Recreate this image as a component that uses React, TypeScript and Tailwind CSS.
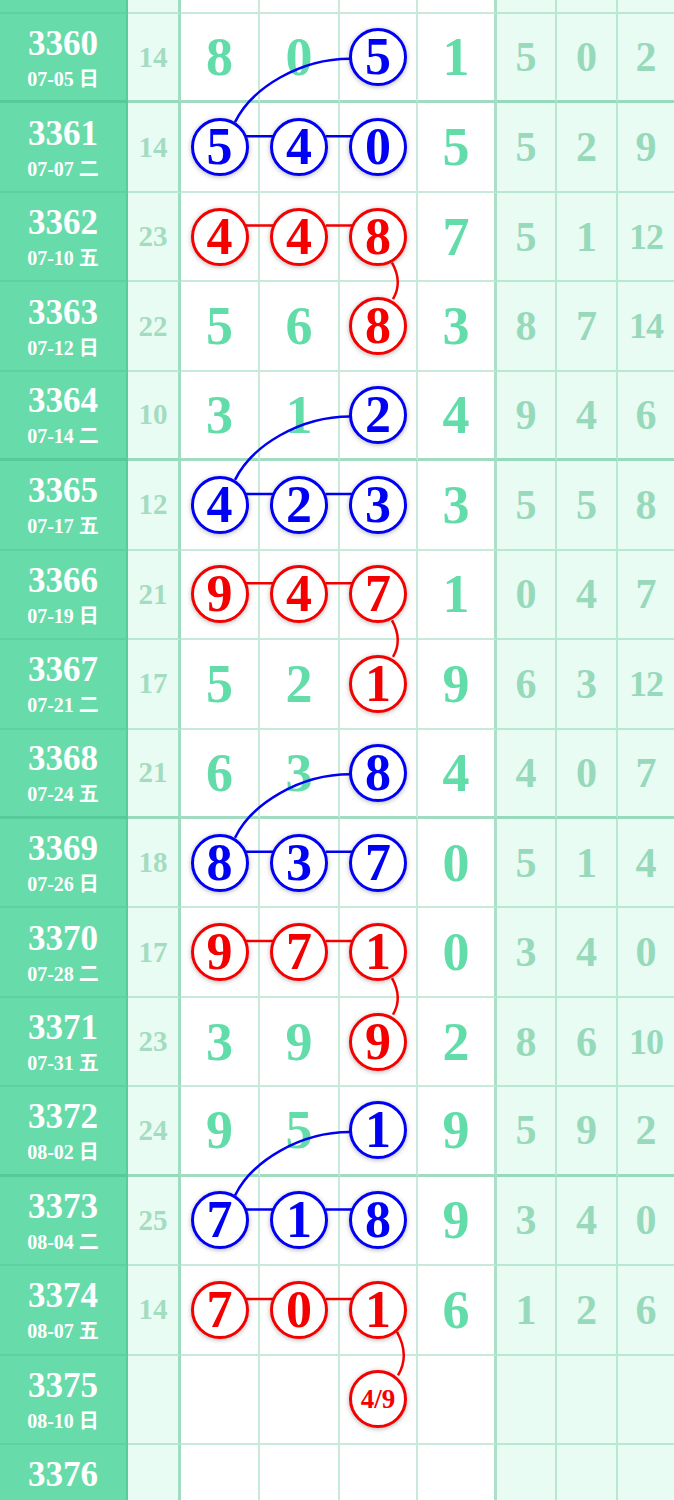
import React from "react";

type Row = [string, string, string, string[], string, string[]];

const rows: Row[] = [
  ["3360", "07-05 日", "14", ["8", "0", "5"], "1", ["5", "0", "2"]],
  ["3361", "07-07 二", "14", ["5", "4", "0"], "5", ["5", "2", "9"]],
  ["3362", "07-10 五", "23", ["4", "4", "8"], "7", ["5", "1", "12"]],
  ["3363", "07-12 日", "22", ["5", "6", "8"], "3", ["8", "7", "14"]],
  ["3364", "07-14 二", "10", ["3", "1", "2"], "4", ["9", "4", "6"]],
  ["3365", "07-17 五", "12", ["4", "2", "3"], "3", ["5", "5", "8"]],
  ["3366", "07-19 日", "21", ["9", "4", "7"], "1", ["0", "4", "7"]],
  ["3367", "07-21 二", "17", ["5", "2", "1"], "9", ["6", "3", "12"]],
  ["3368", "07-24 五", "21", ["6", "3", "8"], "4", ["4", "0", "7"]],
  ["3369", "07-26 日", "18", ["8", "3", "7"], "0", ["5", "1", "4"]],
  ["3370", "07-28 二", "17", ["9", "7", "1"], "0", ["3", "4", "0"]],
  ["3371", "07-31 五", "23", ["3", "9", "9"], "2", ["8", "6", "10"]],
  ["3372", "08-02 日", "24", ["9", "5", "1"], "9", ["5", "9", "2"]],
  ["3373", "08-04 二", "25", ["7", "1", "8"], "9", ["3", "4", "0"]],
  ["3374", "08-07 五", "14", ["7", "0", "1"], "6", ["1", "2", "6"]],
  ["3375", "08-10 日", "", ["", "", "4/9"], "", ["", "", ""]],
];

// row centre in px (rows are 89.44 tall, first starts at 14)
const yc = (r: number) => 58.72 + r * 89.44;

function Circle({ v, color }: { v: string; color: "blue" | "red" }) {
  return (
    <div
      className={`relative z-10 flex h-[58px] w-[58px] items-center justify-center rounded-full border-[3px] bg-white font-bold leading-none shadow-[0_1px_5px_rgba(0,0,0,0.3)] ${
        color === "blue" ? "border-[#0000f5] text-[#0000f5]" : "border-[#f50000] text-[#f50000]"
      } ${v.length > 1 ? "text-[27px]" : "text-[52px]"}`}
    >
      {v}
    </div>
  );
}

function TableRow({ row, i }: { row: Row | null; i: number }) {
  const thick = i % 4 === 0 && i >= 0;
  const b = thick
    ? "border-b-[3px] border-b-[rgba(70,185,135,0.5)]"
    : "border-b-[2px] border-b-[rgba(70,185,135,0.3)]";
  const kind = ((i % 4) + 4) % 4;
  const circleAt = (k: number) => {
    if (i < 0 || !row) return null;
    if (kind === 1) return "blue";
    if (kind === 2) return "red";
    if (k === 2) return kind === 0 ? "blue" : "red";
    return null;
  };
  const mid = (k: number, cls: string) => {
    const v = row ? row[3][k] : "";
    const c = circleAt(k);
    return (
      <div className={`flex h-full items-center justify-center bg-white ${cls} ${b}`}>
        {v && c ? (
          <Circle v={v} color={c} />
        ) : (
          <span className="text-[54px] font-bold leading-none text-[#62dca9]">{v}</span>
        )}
      </div>
    );
  };
  const right = (k: number, cls: string) => {
    const v = row ? row[5][k] : "";
    return (
      <div className={`flex h-full items-center justify-center bg-[#e9fcf3] ${cls} ${b}`}>
        <span
          className={`font-bold leading-none text-[#97d9bb] ${v.length > 1 ? "text-[36px] tracking-[-1px]" : "text-[42px]"}`}
        >
          {v}
        </span>
      </div>
    );
  };
  return (
    <div className={`flex ${i < 0 ? "h-[14px]" : "h-[89.44px]"}`}>
      <div
        className={`flex h-full w-[128px] flex-col items-center justify-center border-r-[2px] border-r-[#58cc9a] bg-[#67dbaa] text-white ${b}`}
      >
        {row && (
          <>
            <span className="text-[35px] font-bold leading-none">{row[0]}</span>
            <span
              className={`mt-[8px] font-['Liberation_Serif','Noto_Sans_CJK_SC',serif] text-[20px] font-bold leading-none ${
                row[1] ? "" : "invisible"
              }`}
            >
              {row[1] || "00-00 日"}
            </span>
          </>
        )}
      </div>
      <div
        className={`flex h-full w-[53px] items-center justify-center border-r-[3px] border-r-[rgba(70,185,135,0.45)] bg-[#e9fcf3] ${b}`}
      >
        <span className="text-[29px] font-bold leading-none text-[#a3dcc1]">{row ? row[2] : ""}</span>
      </div>
      {mid(0, "w-[79px] border-r-[2px] border-r-[rgba(70,185,135,0.3)]")}
      {mid(1, "w-[80px] border-r-[2px] border-r-[rgba(70,185,135,0.3)]")}
      {mid(2, "w-[78px] border-r-[2px] border-r-[rgba(70,185,135,0.3)]")}
      <div
        className={`flex h-full w-[79px] items-center justify-center border-r-[3px] border-r-[rgba(70,185,135,0.45)] bg-white ${b}`}
      >
        <span className="text-[54px] font-bold leading-none text-[#62dca9]">{row ? row[4] : ""}</span>
      </div>
      {right(0, "w-[60px] border-r-[2px] border-r-[rgba(70,185,135,0.3)]")}
      {right(1, "w-[61px] border-r-[2px] border-r-[rgba(70,185,135,0.3)]")}
      {right(2, "w-[56px]")}
    </div>
  );
}

export default function App() {
  const groups = [0, 1, 2, 3];
  return (
    <div className="relative h-[1500px] w-[674px] overflow-hidden bg-white font-['Liberation_Serif',serif]">
      <TableRow row={null} i={-1} />
      {rows.map((r, i) => (
        <TableRow key={r[0]} row={r} i={i} />
      ))}
      <TableRow row={["3376", "", "", ["", "", ""], "", ["", "", ""]]} i={16} />

      <svg className="pointer-events-none absolute left-0 top-0" width="674" height="1500" fill="none" strokeWidth="2.5">
        {groups.map((g) => {
          const r0 = g * 4;
          const last = g === 3;
          return (
            <g key={g}>
              <path
                d={`M350 ${yc(r0)} C300 ${yc(r0)} 252 ${yc(r0) + 29} 235 ${yc(r0 + 1) - 26}`}
                stroke="#0000f5"
              />
              <path d={`M246 ${yc(r0 + 1) - 12} H274 M326 ${yc(r0 + 1) - 12} H353`} stroke="#0000f5" />
              <path d={`M246 ${yc(r0 + 2) - 12} H274 M326 ${yc(r0 + 2) - 12} H353`} stroke="#f50000" />
              {last ? (
                <path
                  d={`M397 ${yc(14) + 21} Q410 ${(yc(14) + yc(15)) / 2} 398 ${yc(15) - 25}`}
                  stroke="#f50000"
                />
              ) : (
                <path
                  d={`M392 ${yc(r0 + 2) + 25} Q403 ${(yc(r0 + 2) + yc(r0 + 3)) / 2} 393 ${yc(r0 + 3) - 28}`}
                  stroke="#f50000"
                />
              )}
            </g>
          );
        })}
      </svg>
    </div>
  );
}
